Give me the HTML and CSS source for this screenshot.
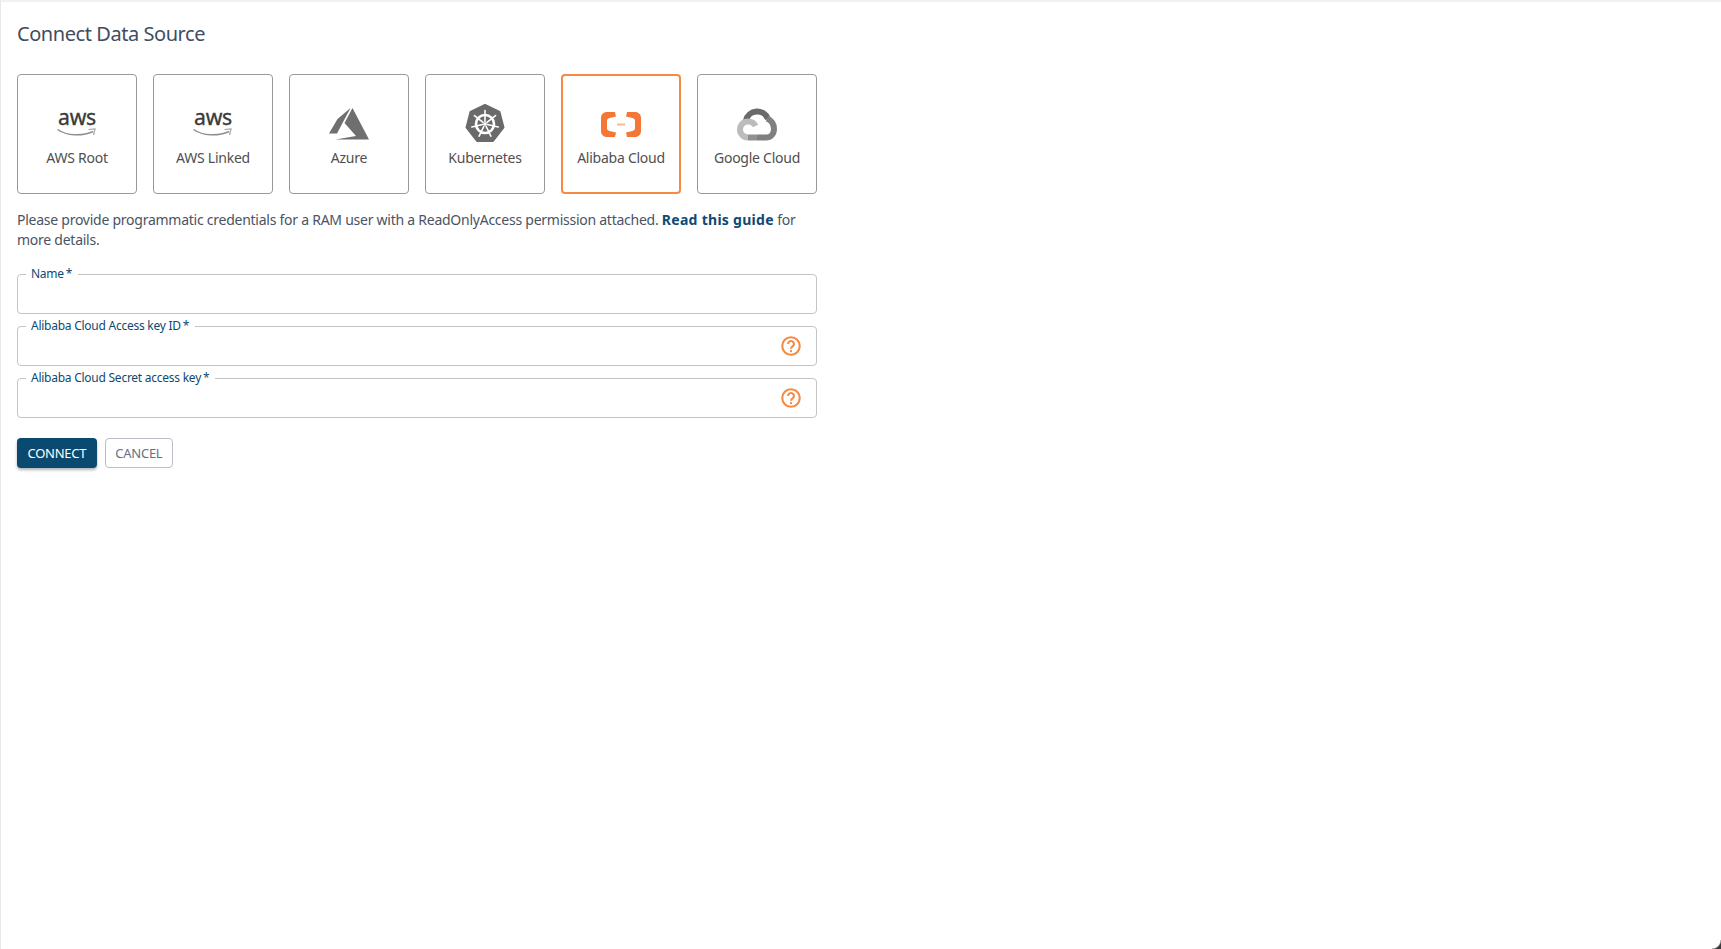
FILE: index.html
```html
<!DOCTYPE html>
<html lang="en">
<head>
    <meta charset="UTF-8">
    <meta name="viewport" content="width=device-width, initial-scale=1.0">
    <title>Connect Data Source</title>
    <link rel="stylesheet" href="styles.css">
</head>
<body>
    <div class="page">
        <h1 class="page-title">Connect Data Source</h1>

        <div class="source-list">
            <button class="source-card" type="button">
                <svg class="source-icon" viewBox="0 0 40 40">
                    <text class="aws-text" x="20" y="21" text-anchor="middle" textLength="38" lengthAdjust="spacingAndGlyphs">aws</text>
                    <path d="M0.5 25.5C10 32 25 32.5 36 27.5" fill="none" stroke="#8f8f8f" stroke-width="1.5"/>
                    <path d="M31.5 25.5L38 25L36.5 31" fill="none" stroke="#a5a5a5" stroke-width="1.2"/>
                </svg>
                <span>AWS Root</span>
            </button>
            <button class="source-card" type="button">
                <svg class="source-icon" viewBox="0 0 40 40">
                    <text class="aws-text" x="20" y="21" text-anchor="middle" textLength="38" lengthAdjust="spacingAndGlyphs">aws</text>
                    <path d="M0.5 25.5C10 32 25 32.5 36 27.5" fill="none" stroke="#8f8f8f" stroke-width="1.5"/>
                    <path d="M31.5 25.5L38 25L36.5 31" fill="none" stroke="#a5a5a5" stroke-width="1.2"/>
                </svg>
                <span>AWS Linked</span>
            </button>
            <button class="source-card" type="button">
                <svg class="source-icon" viewBox="0 0 40 40">
                    <path d="M21.5 4L8.5 15L0 29.5H8Z" fill="#6f6f6f"/>
                    <path d="M23.5 4L15.5 19L27 32L6.5 35.5H40Z" fill="#6f6f6f"/>
                </svg>
                <span>Azure</span>
            </button>
            <button class="source-card" type="button">
                <svg class="source-icon" viewBox="0 0 40 40">
                    <path d="M20 1L34.5 8L38.5 23.5L28 37H12L1.5 23.5L5.5 8Z" fill="#6a6a6a" stroke="#6a6a6a" stroke-width="2" stroke-linejoin="round"/>
                    <g fill="none" stroke="#fff">
                        <circle cx="20" cy="20" r="9" stroke-width="2.6"/>
                        <g stroke-width="1.6" stroke-linecap="round">
                            <path d="M20 17.5V6.5"/>
                            <path d="M20 17.5V6.5" transform="rotate(51.4 20 20)"/>
                            <path d="M20 17.5V6.5" transform="rotate(102.9 20 20)"/>
                            <path d="M20 17.5V6.5" transform="rotate(154.3 20 20)"/>
                            <path d="M20 17.5V6.5" transform="rotate(205.7 20 20)"/>
                            <path d="M20 17.5V6.5" transform="rotate(257.1 20 20)"/>
                            <path d="M20 17.5V6.5" transform="rotate(308.6 20 20)"/>
                        </g>
                    </g>
                    <circle cx="20" cy="20" r="1.8" fill="#fff"/>
                </svg>
                <span>Kubernetes</span>
            </button>
            <button class="source-card source-card-active" type="button">
                <svg class="source-icon" viewBox="0 0 40 40">
                    <path d="M14 8H6C2.5 8 0 10.500 0 14V27C0 30.500 2.500 33 6 33H14L15 28.500L8.500 27C7 26.600 6 25.500 6 24V17C6 15.500 7 14.400 8.500 14L15 12.500Z" fill="#f47735"/>
                    <path d="M26 8H34C37.500 8 40 10.500 40 14V27C40 30.500 37.500 33 34 33H26L25 28.500L31.500 27C33 26.600 34 25.500 34 24V17C34 15.500 33 14.400 31.500 14L25 12.500Z" fill="#f47735"/>
                    <rect x="16" y="19.500" width="8" height="2" fill="#f9b993"/>
                </svg>
                <span>Alibaba Cloud</span>
            </button>
            <button class="source-card" type="button">
                <svg class="source-icon" viewBox="0 0 40 40">
                    <g fill="none" stroke-width="6">
                        <path d="M9 16.500A11.500 11.500 0 0 1 31 15" stroke="#6a6a6a"/>
                        <path d="M30 14.500C34.500 16.500 37 20.500 37 25C37 30 33.500 33.500 29 33.500H20" stroke="#808080"/>
                        <path d="M20 33.500H11" stroke="#919191"/>
                        <path d="M11 33.500C6.500 33.500 3 30 3 25.500C3 21 6.500 17.500 11 17.500C14 17.500 17 19 18.500 22" stroke="#bcbcbc"/>
                    </g>
                </svg>
                <span>Google Cloud</span>
            </button>
        </div>

        <p class="hint">Please provide programmatic credentials for a RAM user with a ReadOnlyAccess permission attached. <a href="#">Read this guide</a> for <span>more details.</span></p>

        <form class="source-form">
            <fieldset class="field">
                <legend>Name<span class="req">*</span></legend>
                <input type="text">
            </fieldset>
            <fieldset class="field">
                <legend>Alibaba Cloud Access key ID<span class="req">*</span></legend>
                <input type="text">
                <svg class="help-icon" viewBox="0 0 24 24">
                    <circle cx="12" cy="12" r="10.500" fill="none" stroke="#f58a42" stroke-width="2.500"/>
                    <path d="M8.500 9.500A3.500 3.500 0 1 1 14 12.400C12.800 13.200 12 13.900 12 15.300" fill="none" stroke="#f58a42" stroke-width="2.500"/>
                    <rect x="10.800" y="17" width="2.400" height="2.400" fill="#f58a42"/>
                </svg>
            </fieldset>
            <fieldset class="field">
                <legend>Alibaba Cloud Secret access key<span class="req">*</span></legend>
                <input type="text">
                <svg class="help-icon" viewBox="0 0 24 24">
                    <circle cx="12" cy="12" r="10.500" fill="none" stroke="#f58a42" stroke-width="2.500"/>
                    <path d="M8.500 9.500A3.500 3.500 0 1 1 14 12.400C12.800 13.200 12 13.900 12 15.300" fill="none" stroke="#f58a42" stroke-width="2.500"/>
                    <rect x="10.800" y="17" width="2.400" height="2.400" fill="#f58a42"/>
                </svg>
            </fieldset>

            <div class="form-actions">
                <button class="btn btn-primary" type="button">CONNECT</button>
                <button class="btn btn-outline" type="button">CANCEL</button>
            </div>
        </form>

        <div class="window-corner"></div>
    </div>
</body>
</html>
```

FILE: styles.css
```css
html, body {
    height: 100%;
}
body {
    margin: 0;
    font-family: "Noto Sans", sans-serif;
    font-size: 14px;
    letter-spacing: -0.018em;
    color: #4a5363;
    background-color: #fff;
}
.page {
    position: relative;
    box-sizing: border-box;
    min-height: 100%;
    padding: 16px;
    border-top: 2px solid #f1f1f1;
    border-left: 1px solid #e8e8e8;
}
.page-title {
    margin: 0 0 24px 0;
    font-size: 20px;
    font-weight: 400;
    letter-spacing: -0.022em;
    line-height: 32px;
    color: #414d5f;
}
.source-list {
    display: flex;
    gap: 16px;
}
.source-card {
    box-sizing: border-box;
    width: 120px;
    height: 120px;
    padding: 4px 0 0 0;
    display: flex;
    flex-direction: column;
    align-items: center;
    justify-content: center;
    gap: 4px;
    background: #fff;
    border: 1px solid #999;
    border-radius: 4px;
    font-family: inherit;
    font-size: 14px;
    line-height: 20px;
    letter-spacing: inherit;
    color: #4f4f4f;
}
.source-card-active {
    border: 2px solid #f58a42;
}
.source-icon {
    width: 40px;
    height: 40px;
    overflow: visible;
}
.aws-text {
    font-family: "Noto Sans", sans-serif;
    font-size: 22px;
    fill: #3a3a3a;
    stroke: #3a3a3a;
    stroke-width: 0.35;
}
.hint {
    width: 800px;
    margin: 16px 0 18px 0;
    line-height: 20px;
}
.hint a {
    color: #0d4a73;
    font-weight: 700;
    letter-spacing: 0.02em;
    text-decoration: none;
}
.source-form {
    width: 800px;
}
.field {
    box-sizing: border-box;
    display: flex;
    align-items: center;
    height: 46px;
    margin: 0 0 6px 0;
    padding: 0 15px 6px 8px;
    border: 1px solid #c4c4c4;
    border-radius: 4px;
    min-width: 0;
}
.field legend {
    padding: 0 6px 0 5px;
    font-size: 12px;
    line-height: 12px;
    color: #0d4a73;
}
.req {
    margin-left: 2px;
}
.field input {
    flex: 1;
    min-width: 0;
    height: 28px;
    padding: 0 5px;
    border: none;
    outline: none;
    background: transparent;
    font-family: inherit;
    font-size: 14px;
}
.help-icon {
    flex: none;
    width: 20px;
    height: 20px;
}
.form-actions {
    display: flex;
    gap: 8px;
    margin-top: 20px;
}
.btn {
    box-sizing: border-box;
    height: 30px;
    border-radius: 4px;
    font-family: inherit;
    font-size: 13px;
    line-height: 20px;
    letter-spacing: inherit;
}
.btn-primary {
    padding: 0 10.500px;
    background-color: #0b4a70;
    border: none;
    color: #fff;
    box-shadow: 0 2px 3px rgba(0,0,0,0.3);
}
.btn-outline {
    padding: 0 9.500px;
    background-color: #fff;
    border: 1px solid #b9bdc5;
    color: #657087;
}
.window-corner {
    position: absolute;
    right: 0;
    bottom: 0;
    width: 9px;
    height: 9px;
    background: radial-gradient(circle at 0 0, transparent 8px, #3a3a3a 9.500px);
}
```
